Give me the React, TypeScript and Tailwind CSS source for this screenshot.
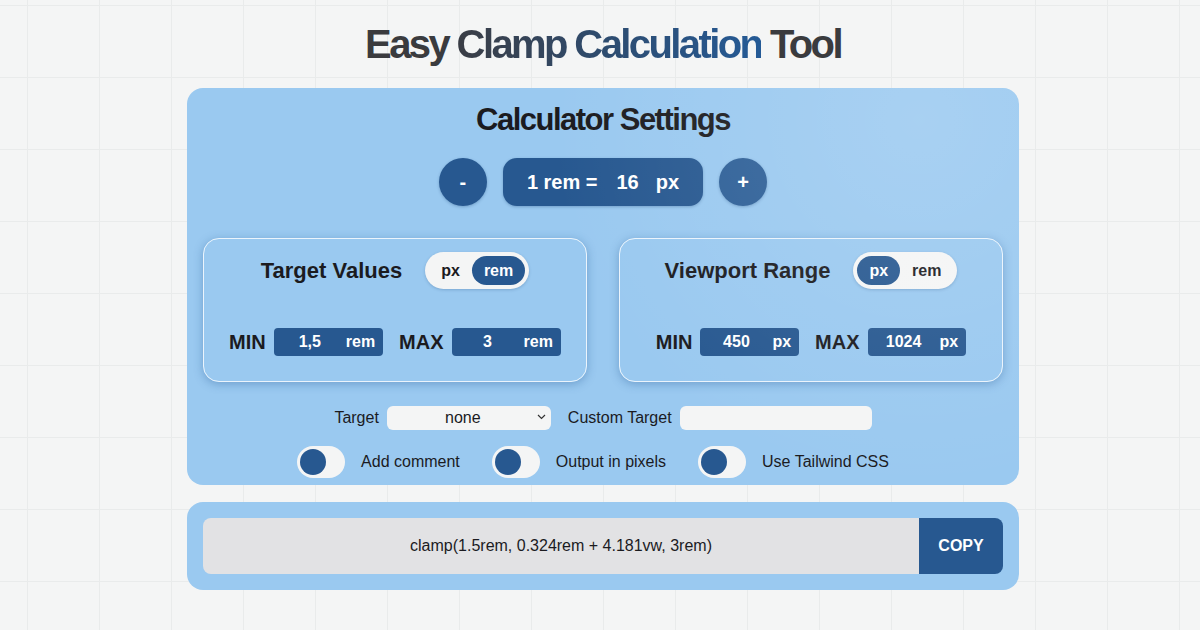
import React from "react";

function UnitToggle({ active }: { active: "px" | "rem" }) {
  const opt = (u: "px" | "rem") =>
    u === active
      ? "h-[29px] px-3 rounded-full bg-[#275890] text-white text-[16px] font-bold flex items-center"
      : "h-[29px] px-3 rounded-full text-[#1b1b1f] text-[16px] font-bold flex items-center";
  return (
    <div className="h-[37px] rounded-full bg-[#f4f5f5] p-1 flex items-center shadow-[0_1px_3px_rgba(30,70,120,0.25)]">
      <div className={opt("px")}>px</div>
      <div className={opt("rem")}>rem</div>
    </div>
  );
}

function ValueInput({ label, value, unit }: { label: string; value: string; unit: string }) {
  return (
    <div className="flex items-center gap-2">
      <span className="text-[20px] font-bold text-[#1b1b1f]">{label}</span>
      <div className="h-7 rounded bg-[#275890] text-white font-bold text-[16px] flex items-center pr-2">
        <span className="w-[72px] text-center">{value}</span>
        <span>{unit}</span>
      </div>
    </div>
  );
}

function Card({
  title,
  active,
  min,
  max,
  unit,
}: {
  title: string;
  active: "px" | "rem";
  min: string;
  max: string;
  unit: string;
}) {
  return (
    <div className="w-[384px] h-[144px] rounded-2xl border border-white/80 shadow-[0_2px_10px_rgba(30,80,140,0.35)] flex flex-col items-center pt-[13px]">
      <div className="flex items-center gap-[23px] h-[37px]">
        <h2 className="text-[22px] font-bold tracking-[0px] text-[#1b1b1f]">{title}</h2>
        <UnitToggle active={active} />
      </div>
      <div className="mt-[38px] flex items-center gap-4">
        <ValueInput label="MIN" value={min} unit={unit} />
        <ValueInput label="MAX" value={max} unit={unit} />
      </div>
    </div>
  );
}

function Switch({ label }: { label: string }) {
  return (
    <div className="flex items-center gap-4">
      <div className="w-12 h-8 rounded-full bg-[#f4f5f5] flex items-center px-[3px]">
        <div className="w-[26px] h-[26px] rounded-full bg-[#275890]" />
      </div>
      <span className="text-[16px] text-[#1b1b1f]">{label}</span>
    </div>
  );
}

export default function App() {
  return (
    <div className="min-h-[630px] w-full bg-[#f4f5f5] [background-image:linear-gradient(to_right,#e9ebeb_1px,transparent_1px),linear-gradient(to_bottom,#e9ebeb_1px,transparent_1px)] [background-size:72px_72px] [background-position:27px_5px] font-['Liberation_Sans',Arial,sans-serif] flex flex-col items-center pt-[20px] pl-[6px]">
      <h1 className="text-[40px] leading-[48px] font-bold tracking-[-2.6px] text-[#3a3b3e] whitespace-nowrap">
        Easy{" "}
        <span className="bg-linear-to-r from-[#3a3d45] via-[#2d4c70] to-[#245a96] bg-clip-text text-transparent">
          Clamp Calculation
        </span>{" "}
        Tool
      </h1>

      <div className="relative mt-[20px] w-[832px] rounded-2xl bg-[#9ac9f0] pt-[14px] pb-[7px] px-4 flex flex-col items-center overflow-hidden">
        <div className="pointer-events-none absolute inset-0 bg-[radial-gradient(circle_at_88%_8%,rgba(255,255,255,0.14),transparent_45%)]" />
        <h2 className="text-[31px] leading-[36px] font-bold tracking-[-1.5px] text-[#1b1b1f]">
          Calculator Settings
        </h2>

        <div className="mt-[20px] flex items-center gap-4 h-12">
          <div className="w-12 h-12 rounded-full bg-[#275890] text-white text-[20px] font-bold flex items-center justify-center shadow-[0_1px_3px_rgba(20,60,110,0.3)]">
            -
          </div>
          <div className="h-12 px-6 rounded-[14px] bg-[#275890] text-white text-[20px] font-bold flex items-center shadow-[0_1px_3px_rgba(20,60,110,0.3)]">
            <span>1 rem =</span>
            <span className="ml-[19px]">16</span>
            <span className="ml-[17px]">px</span>
          </div>
          <div className="w-12 h-12 rounded-full bg-[#2d5f97] text-white text-[20px] font-bold flex items-center justify-center shadow-[0_1px_3px_rgba(20,60,110,0.3)]">
            +
          </div>
        </div>

        <div className="mt-8 flex gap-8 w-full">
          <Card title="Target Values" active="rem" min="1,5" max="3" unit="rem" />
          <Card title="Viewport Range" active="px" min="450" max="1024" unit="px" />
        </div>

        <div className="mt-6 flex items-center text-[16px] text-[#1b1b1f]">
          <span className="mr-2">Target</span>
          <div className="relative w-[164px] h-6 rounded-md bg-[#f4f5f5] flex items-center justify-center pr-3">
            <span>none</span>
            <svg
              className="absolute right-[5px] top-[8px]"
              width="9"
              height="6"
              viewBox="0 0 9 6"
              fill="none"
              stroke="#333"
              strokeWidth="1.2"
            >
              <path d="M1 1l3.5 3.5L8 1" />
            </svg>
          </div>
          <span className="ml-[17px] mr-2">Custom Target</span>
          <div className="w-[192px] h-6 rounded-md bg-[#f4f5f5]" />
        </div>

        <div className="mt-4 mr-[20px] flex items-center gap-8">
          <Switch label="Add comment" />
          <Switch label="Output in pixels" />
          <Switch label="Use Tailwind CSS" />
        </div>
      </div>

      <div className="mt-[17px] w-[832px] rounded-2xl bg-[#9ac9f0] p-4 flex">
        <div className="flex-1 h-14 bg-[#e2e2e4] rounded-l-lg flex items-center justify-center text-[16px] text-[#1b1b1f]">
          clamp(1.5rem, 0.324rem + 4.181vw, 3rem)
        </div>
        <div className="w-[84px] h-14 bg-[#275890] rounded-r-lg text-white font-bold text-[16px] flex items-center justify-center">
          COPY
        </div>
      </div>
    </div>
  );
}
